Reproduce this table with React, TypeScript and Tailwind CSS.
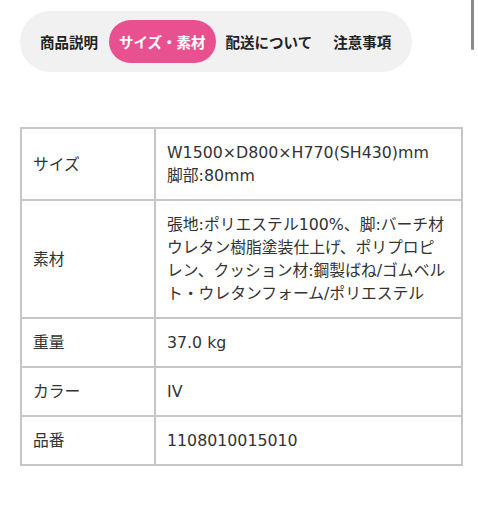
import React from 'react';

const tabs = ['商品説明', 'サイズ・素材', '配送について', '注意事項'];

const rows: { label: string; value: React.ReactNode }[] = [
  {
    label: 'サイズ',
    value: (
      <>
        W1500×D800×H770(SH430)mm
        <br />
        脚部:80mm
      </>
    )
  },
  {
    label: '素材',
    value: (
      <>
        張地:ポリエステル100%、脚:バーチ材
        <br />
        ウレタン樹脂塗装仕上げ、ポリプロピ
        <br />
        レン、クッション材:鋼製ばね/ゴムベル
        <br />
        ト・ウレタンフォーム/ポリエステル
      </>
    )
  },
  { label: '重量', value: '37.0 kg' },
  { label: 'カラー', value: 'IV' },
  { label: '品番', value: '1108010015010' }
];

export default function App() {
  return (
    <div
      className="relative w-[478px] h-[512px] bg-white text-[#333] overflow-hidden"
      style={{ fontFamily: '"Noto Sans CJK JP", "Noto Sans", sans-serif' }}
    >
      {/* scroll indicator */}
      <div className="absolute right-[4px] top-0 w-[3px] h-[50px] rounded-b-full bg-[#8a8a8a]" />

      <div className="pt-[11px] pl-[20px]">
        <div className="flex items-center w-[392px] h-[61px] rounded-full bg-[#f1f1f1] px-[20px]">
          {tabs.map((t, i) =>
            i === 1 ? (
              <div
                key={t}
                className="ml-[11px] mr-[10px] h-[43px] px-[10px] flex items-center rounded-full bg-[#e9508f] text-white font-bold text-[14.5px]"
              >
                {t}
              </div>
            ) : (
              <div key={t} className={`font-bold text-[14.5px] text-[#222] ${i === 3 ? 'ml-[21px]' : ''}`}>
                {t}
              </div>
            )
          )}
        </div>
      </div>

      <div className="pt-[55px] pl-[20px]">
        <table
          className="w-[443px] border-collapse text-[15.8px] leading-[23px]"
          style={{ fontFamily: '"DejaVu Sans", "Noto Sans CJK JP", sans-serif' }}
        >
          <tbody>
            {rows.map((r) => (
              <tr key={r.label}>
                <td className="w-[134px] border-2 border-[#c6c6c6] px-[11px] py-[12px] align-middle">{r.label}</td>
                <td className="border-2 border-[#c6c6c6] px-[11px] py-[12px] align-middle whitespace-nowrap">{r.value}</td>
              </tr>
            ))}
          </tbody>
        </table>
      </div>
    </div>
  );
}
